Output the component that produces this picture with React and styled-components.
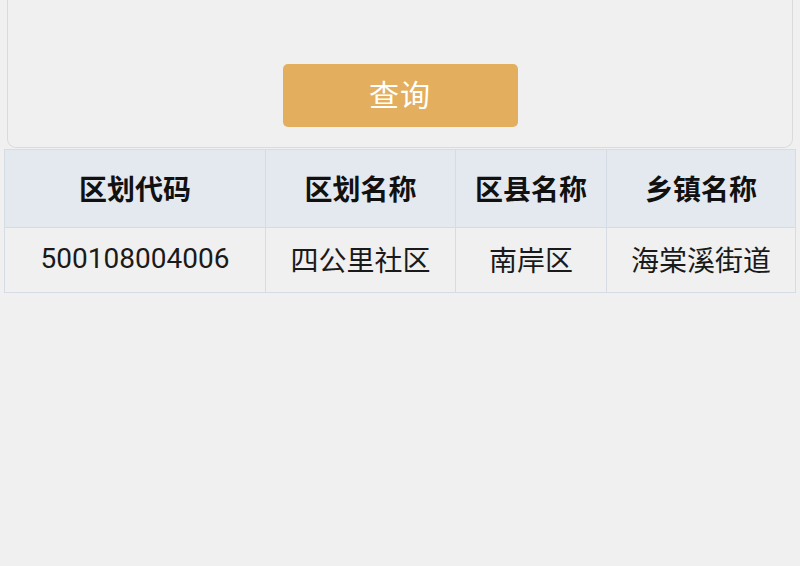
import React from "react";
import styled, { createGlobalStyle } from "styled-components";

const GlobalStyle = createGlobalStyle`
  html, body {
    margin: 0;
    padding: 0;
    background: #f0f0f0;
    font-family: Roboto, "Noto Sans CJK SC", "Noto Sans", sans-serif;
  }
`;

const St = {
  Page: styled.div`
    width: 800px;
    height: 566px;
    box-sizing: border-box;
    padding: 0 4px;
    background: #f0f0f0;
  `,

  SearchCard: styled.div`
    display: flex;
    justify-content: center;
    align-items: flex-end;
    height: 148px;
    margin: 0 3px;
    box-sizing: border-box;
    padding-bottom: 20px;
    border: 1px solid #d9dadc;
    border-top: none;
    border-radius: 0 0 9px 9px;
  `,

  QueryButton: styled.button`
    width: 235px;
    height: 63px;
    padding: 0 0 5px;
    border: none;
    border-radius: 5px;
    background: #e3af5e;
    color: #ffffff;
    font-family: "Noto Sans CJK SC", sans-serif;
    font-size: 30px;
    letter-spacing: 1px;
    cursor: pointer;
  `,

  Table: styled.table`
    width: 791px;
    margin-top: 1px;
    border-collapse: collapse;
    table-layout: fixed;
  `,

  HeadCell: styled.th`
    width: ${({ w }) => w}px;
    height: 75px;
    padding: 0 0 2px;
    background: #e4e9f0;
    border: 1px solid #d6dce4;
    font-size: 28px;
    font-weight: 700;
    color: #111111;
    text-align: center;
  `,

  Cell: styled.td`
    height: 61px;
    padding: 0 0 3px;
    background: #f0f0f0;
    border: 1px solid #d6dce4;
    font-size: 28px;
    font-weight: 400;
    color: #1a1a1a;
    text-align: center;
  `,
};

const columns = [
  { key: "code", title: "区划代码", width: 260 },
  { key: "name", title: "区划名称", width: 189 },
  { key: "county", title: "区县名称", width: 150 },
  { key: "town", title: "乡镇名称", width: 188 },
];

const rows = [
  {
    code: "500108004006",
    name: "四公里社区",
    county: "南岸区",
    town: "海棠溪街道",
  },
];

const App = () => (
  <St.Page>
    <GlobalStyle />
    <St.SearchCard>
      <St.QueryButton>查询</St.QueryButton>
    </St.SearchCard>
    <St.Table>
      <thead>
        <tr>
          {columns.map((c) => (
            <St.HeadCell key={c.key} w={c.width}>
              {c.title}
            </St.HeadCell>
          ))}
        </tr>
      </thead>
      <tbody>
        {rows.map((r) => (
          <tr key={r.code}>
            {columns.map((c) => (
              <St.Cell key={c.key}>{r[c.key]}</St.Cell>
            ))}
          </tr>
        ))}
      </tbody>
    </St.Table>
  </St.Page>
);

export default App;
